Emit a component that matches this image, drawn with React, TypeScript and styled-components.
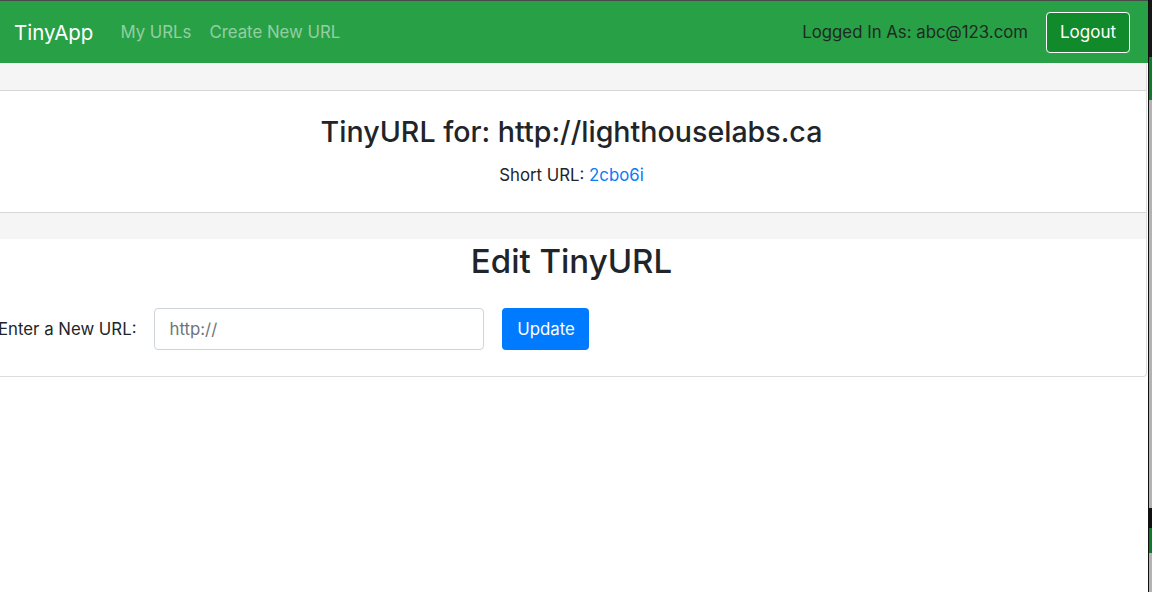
import React from "react";
import styled, { createGlobalStyle } from "styled-components";

const Global = createGlobalStyle`
  html, body { margin: 0; padding: 0; background: #ffffff; }
  body { font-family: Inter, "Noto Sans", sans-serif; color: #212529; }
  * { box-sizing: border-box; }
`;

const Screen = styled.div`
  display: flex;
  width: 1152px;
  height: 592px;
  overflow: hidden;
`;

const Viewport = styled.div`
  width: 1148px;
  display: flex;
  flex-direction: column;
  border-top: 1px solid #4a4a4a;
  overflow: hidden;
`;

const Edge = styled.div`
  width: 4px;
  border-left: 1px solid #111;
  background: linear-gradient(
    to bottom,
    #161616 0px,
    #161616 57px,
    #0f7a2c 57px,
    #0f7a2c 100px,
    #b3b3b3 100px,
    #b3b3b3 508px,
    #111 508px,
    #111 528px,
    #0f7a2c 528px,
    #0f7a2c 553px,
    #b3b3b3 553px
  );
`;

const Navbar = styled.nav`
  height: 62px;
  flex: none;
  background: #28a046;
  display: flex;
  align-items: center;
  padding: 0 18px 0 14px;
`;

const Brand = styled.a`
  font-size: 20.5px;
  color: #ffffff;
  text-decoration: none;
  margin-right: 18px;
`;

const NavLink = styled.a`
  font-size: 16.8px;
  color: rgba(255, 255, 255, 0.5);
  text-decoration: none;
  padding: 0 9px;
`;

const Spacer = styled.div`
  flex: 1;
`;

const UserText = styled.span`
  font-size: 16.8px;
  color: #1f2a22;
  margin-right: 18px;
`;

const OutlineButton = styled.button`
  height: 41px;
  width: 84px;
  padding: 0;
  background: #118a2b;
  border: 1px solid #ffffff;
  border-radius: 4px;
  color: #ffffff;
  font-family: inherit;
  font-size: 17px;
`;

const Card = styled.div`
  margin: 0 1px 0 -4px;
  border: 1px solid #dcdcdc;
  border-top: none;
  border-radius: 0 0 4px 4px;
  display: flex;
  flex-direction: column;
`;

const CardHeader = styled.div`
  height: 28px;
  background: #f5f5f5;
  border-bottom: 1px solid #d6d6d6;
`;

const CardBody = styled.div`
  height: 121px;
  display: flex;
  flex-direction: column;
  align-items: center;
  padding-top: 24px;
`;

const Title = styled.h3`
  margin: 0;
  font-size: 28.6px;
  font-weight: 500;
  line-height: 1.2;
`;

const ShortLine = styled.p`
  margin: 16px 0 0;
  font-size: 16.8px;
`;

const Link = styled.a`
  color: #0a7bf5;
  text-decoration: none;
`;

const CardFooter = styled.div`
  height: 27px;
  background: #f5f5f5;
  border-top: 1px solid #d6d6d6;
`;

const EditSection = styled.div`
  height: 137px;
  display: flex;
  flex-direction: column;
  align-items: center;
  padding-top: 3px;
`;

const EditTitle = styled.h2`
  margin: 0;
  font-size: 33px;
  font-weight: 500;
  line-height: 1.2;
`;

const Form = styled.form`
  align-self: stretch;
  display: flex;
  align-items: center;
  gap: 18px;
  margin-top: 26px;
  padding-left: 1px;
`;

const Label = styled.label`
  font-size: 16.8px;
  color: #212529;
`;

const Input = styled.input`
  width: 330px;
  height: 42px;
  border: 1px solid #ced4da;
  border-radius: 4px;
  padding: 0 14px;
  font-family: inherit;
  font-size: 16.8px;
  color: #495057;
  &::placeholder { color: #6c757d; }
`;

const PrimaryButton = styled.button`
  height: 42px;
  width: 87px;
  background: #007bff;
  border: none;
  border-radius: 4px;
  color: #ffffff;
  font-family: inherit;
  font-size: 16.8px;
`;

export default function App() {
  return (
    <>
      <Global />
      <Screen>
        <Viewport>
          <Navbar>
            <Brand href="#">TinyApp</Brand>
            <NavLink href="#">My URLs</NavLink>
            <NavLink href="#">Create New URL</NavLink>
            <Spacer />
            <UserText>Logged In As: abc@123.com</UserText>
            <OutlineButton type="button">Logout</OutlineButton>
          </Navbar>
          <Card>
            <CardHeader />
            <CardBody>
              <Title>TinyURL for: http://lighthouselabs.ca</Title>
              <ShortLine>
                Short URL: <Link href="#">2cbo6i</Link>
              </ShortLine>
            </CardBody>
            <CardFooter />
            <EditSection>
              <EditTitle>Edit TinyURL</EditTitle>
              <Form onSubmit={(e) => e.preventDefault()}>
                <Label htmlFor="newurl">Enter a New URL:</Label>
                <Input id="newurl" placeholder="http://" />
                <PrimaryButton type="submit">Update</PrimaryButton>
              </Form>
            </EditSection>
          </Card>
        </Viewport>
        <Edge />
      </Screen>
    </>
  );
}
